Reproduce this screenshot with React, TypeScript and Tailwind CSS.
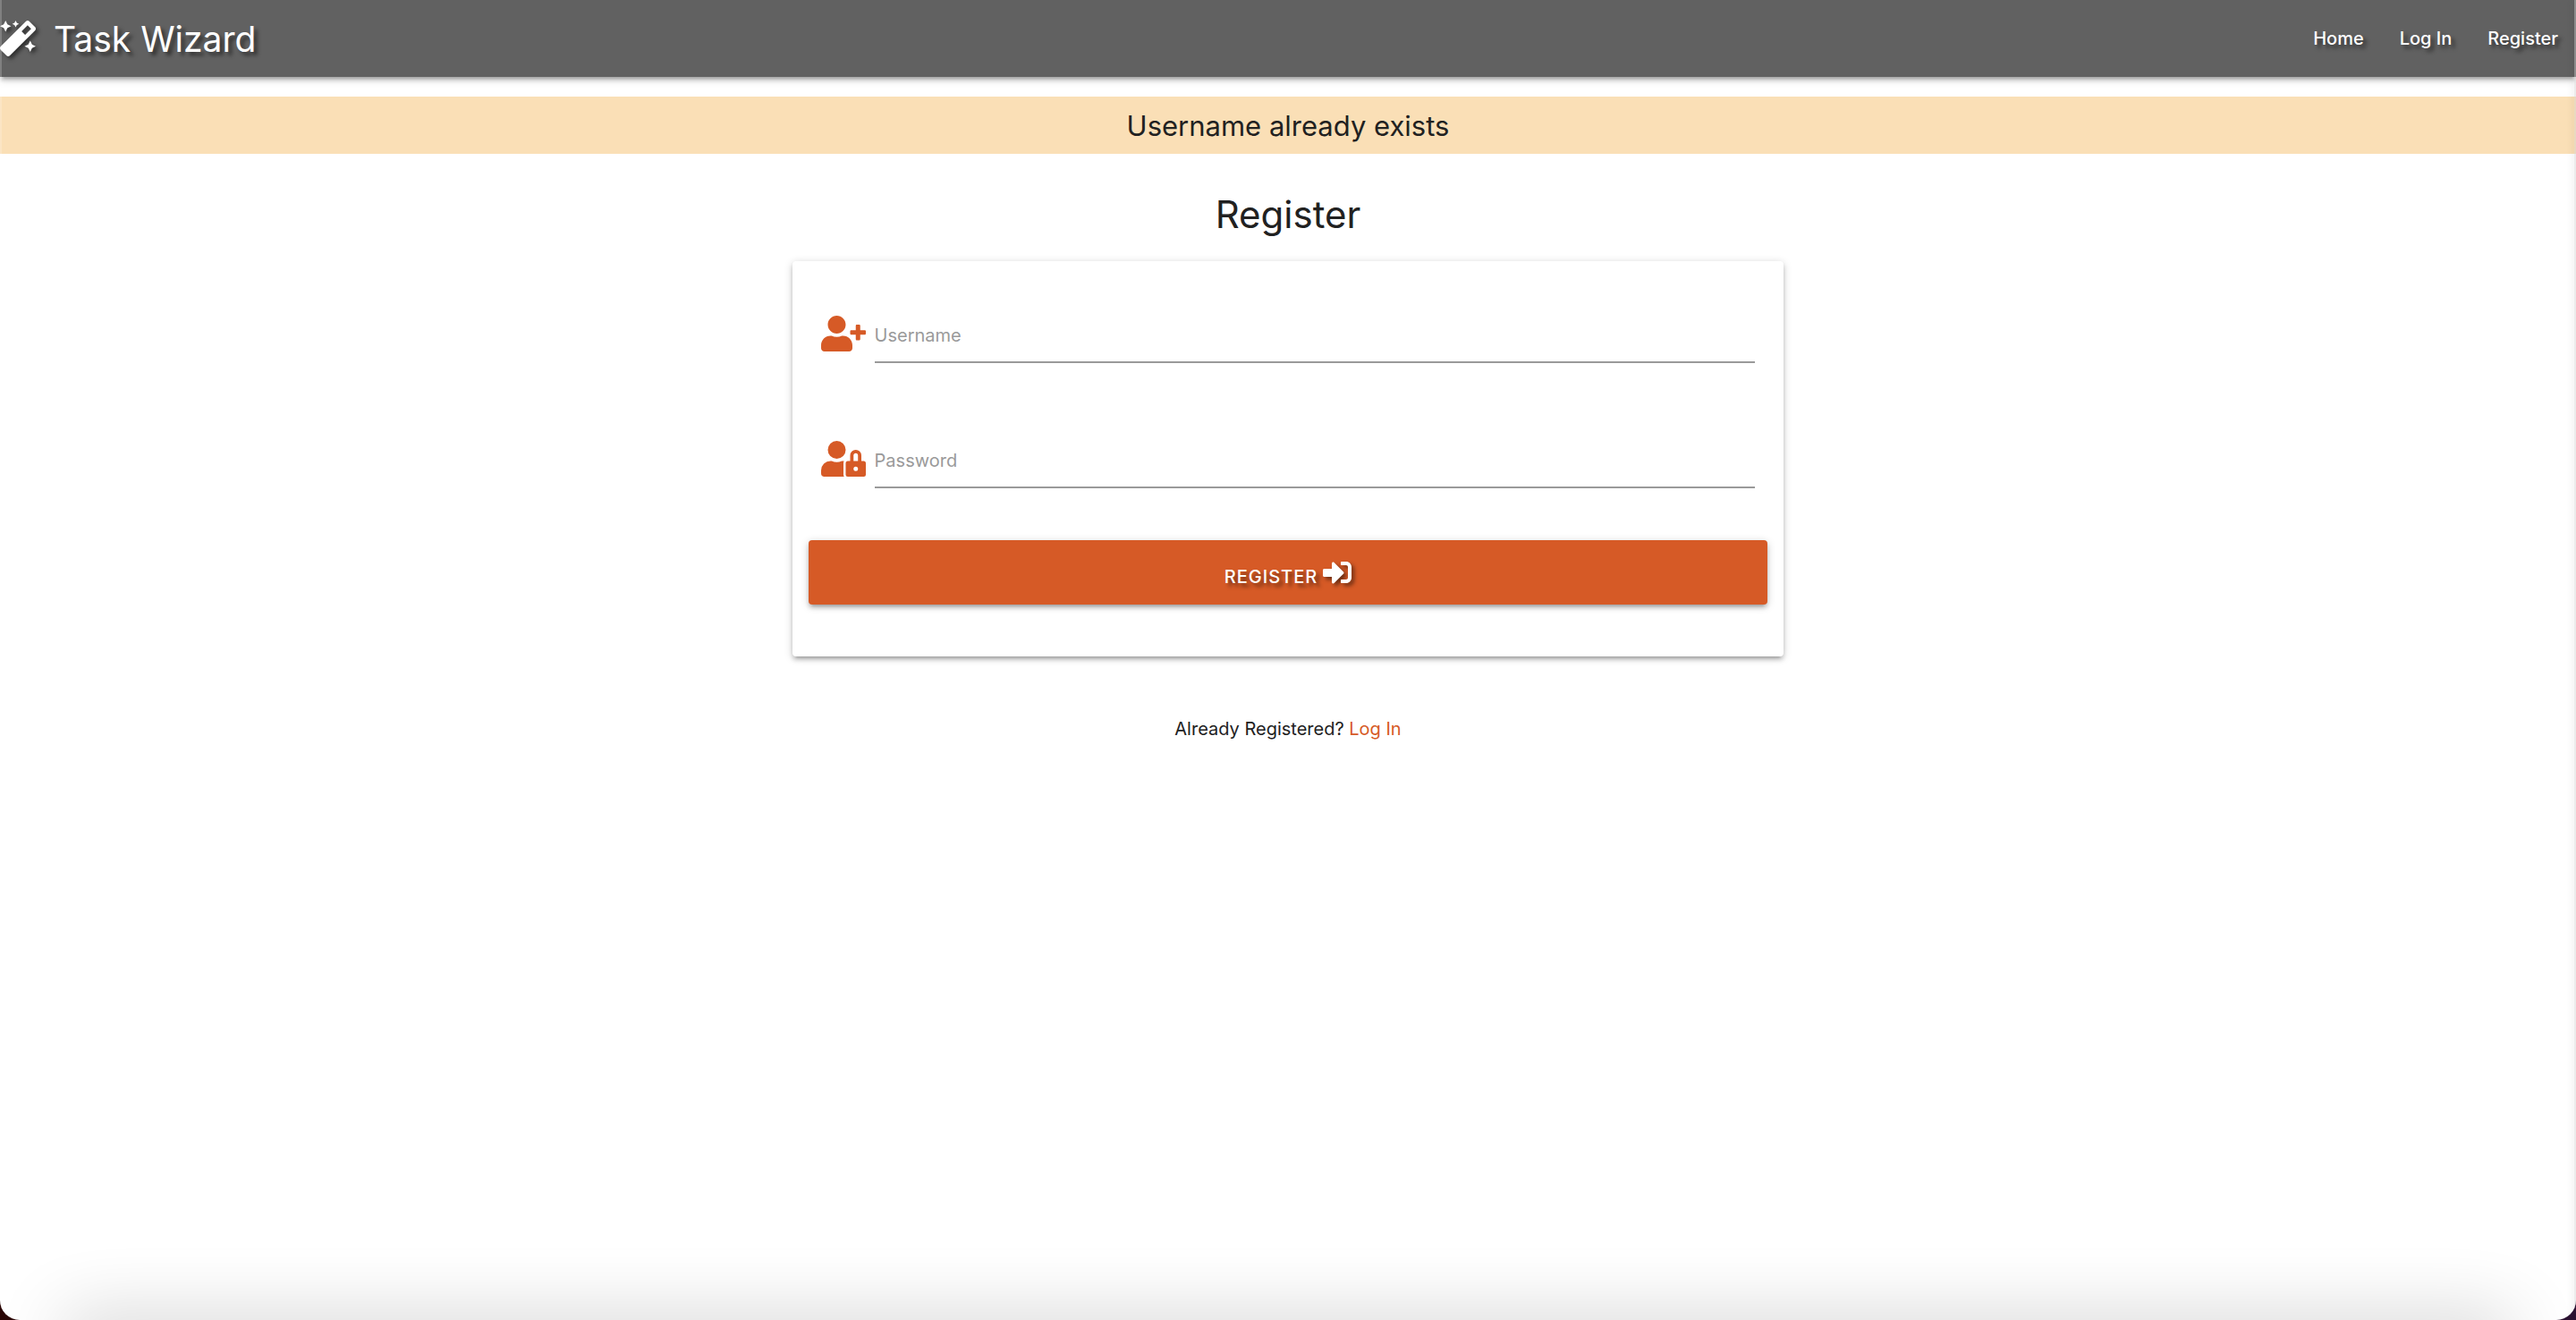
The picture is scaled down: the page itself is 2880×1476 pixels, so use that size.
import type { ReactNode } from "react";
import { FaMagic, FaSignInAlt, FaUserLock, FaUserPlus } from "react-icons/fa";

const navLinks = ["Home", "Log In", "Register"];

function NavBar() {
  return (
    <nav className="flex h-[86px] items-center justify-between bg-[#616161] text-white shadow-[0_4px_4px_rgba(0,0,0,0.14),0_6px_2px_-4px_rgba(0,0,0,0.12),0_2px_10px_rgba(0,0,0,0.2)]">
      <a
        href="#"
        className="flex items-center gap-5 text-[39px] leading-none text-shadow-[4px_4px_4px_rgba(0,0,0,0.5)]"
      >
        <FaMagic className="size-10 drop-shadow-[3px_3px_2px_rgba(0,0,0,0.5)]" />
        Task Wizard
      </a>
      <ul className="flex gap-10 pr-5 text-[20px] font-medium">
        {navLinks.map((label) => (
          <li key={label}>
            <a href="#" className="text-shadow-[4px_4px_4px_rgba(0,0,0,0.5)]">
              {label}
            </a>
          </li>
        ))}
      </ul>
    </nav>
  );
}

type FieldProps = { id: string; label: string; type: string; icon: ReactNode };

function Field({ id, label, type, icon }: FieldProps) {
  return (
    <div className="flex h-[140px] items-start gap-[10px] px-[14px] text-[#d65a26]">
      <label htmlFor={id} aria-label={label} className="pt-[11px]">
        {icon}
      </label>
      <input
        id={id}
        type={type}
        placeholder={label}
        className="h-16 min-w-0 flex-1 rounded-none border-b-2 border-[#9a9a9a] bg-transparent pt-1 text-[20px] text-[#212121] outline-none placeholder:text-[#9a9a9a]"
      />
    </div>
  );
}

export default function App() {
  return (
    <div className="min-h-screen bg-linear-to-r from-[#2a0504] to-[#2a1030] font-[Inter,sans-serif] text-[#212121]">
      <div className="relative min-h-screen overflow-hidden rounded-b-[22px] bg-white">
        <NavBar />
        <main className="flex flex-col items-center">
          <p className="mt-[22px] w-full bg-[#fadfb6] pt-0.5 text-center text-[31px] leading-[62px]">
            Username already exists
          </p>
          <h1 className="mt-10 text-[42px] leading-[56px]">Register</h1>
          <form
            className="mt-6 w-[38.5%] rounded-[4px] px-[18px] pt-[50px] pb-[58px] shadow-[0_4px_4px_rgba(0,0,0,0.14),0_6px_2px_-4px_rgba(0,0,0,0.12),0_2px_10px_rgba(0,0,0,0.2)]"
            onSubmit={(event) => event.preventDefault()}
          >
            <Field
              id="username"
              label="Username"
              type="text"
              icon={<FaUserPlus className="h-10 w-[50px]" />}
            />
            <Field
              id="password"
              label="Password"
              type="password"
              icon={<FaUserLock className="h-10 w-[50px]" />}
            />
            <button
              type="submit"
              className="-mt-[18px] flex h-[72px] w-full items-center justify-center gap-[6px] rounded-[4px] bg-[#d65a26] text-[20px] font-medium tracking-[1px] text-white uppercase shadow-[0_4px_4px_rgba(0,0,0,0.14),0_6px_2px_-4px_rgba(0,0,0,0.12),0_2px_10px_rgba(0,0,0,0.2)] text-shadow-[4px_4px_4px_rgba(0,0,0,0.5)]"
            >
              <span className="pt-[10px]">Register</span>
              <FaSignInAlt className="size-8 drop-shadow-[3px_3px_2px_rgba(0,0,0,0.5)]" />
            </button>
          </form>
          <p className="mt-[66px] text-[20px] leading-[30px]">
            Already Registered?{" "}
            <a href="#" className="text-[#d65a26]">
              Log In
            </a>
          </p>
        </main>
        <div
          aria-hidden="true"
          className="pointer-events-none absolute inset-x-18 -bottom-10 h-10 shadow-[0_0_80px_0_rgba(0,0,0,0.24)]"
        />
        <div
          aria-hidden="true"
          className="pointer-events-none absolute inset-y-0 left-0 w-[2px] bg-white/20"
        />
        <div
          aria-hidden="true"
          className="pointer-events-none absolute inset-y-0 right-0 w-[2px] bg-[#d0d0d0]/40 shadow-[0_0_8px_rgba(0,0,0,0.2)]"
        />
      </div>
    </div>
  );
}
